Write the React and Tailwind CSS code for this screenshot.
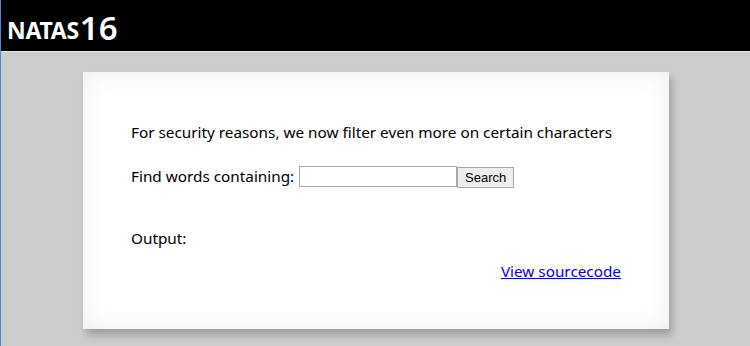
export default function App() {
  return (
    <div className="w-[750px] h-[346px] overflow-hidden bg-[#cccccc] border-l border-[#3c8fdc] relative" style={{ fontFamily: '"Noto Sans", sans-serif' }}>
      <div className="h-[52px] bg-black border-b border-[#e6e6e6] flex items-end pl-[6px] pb-[9px]">
        <span className="text-white font-bold text-[23px] leading-none tracking-[-0.3px]">NATAS</span>
        <span className="text-white text-[33px] leading-none font-semibold ml-[1px] relative top-[2px]">16</span>
      </div>
      <div className="pt-[20px] flex">
        <div className="ml-[82px] w-[586px] h-[257px] bg-white shadow-[inset_0_0_25px_rgba(0,0,0,0.07),3px_6px_7px_rgba(0,0,0,0.22)] px-[48px] pt-[49px] text-[15.3px] text-black">
          <p className="leading-[22px]">For security reasons, we now filter even more on certain characters</p>
          <div className="flex items-center mt-[22px] h-[22px]">
            <span className="leading-[22px] mr-[5px]">Find words containing:</span>
            <input className="w-[158px] h-[21px] border border-[#a9a9a9] bg-white" />
            <button className="h-[21px] w-[57px] border border-[#a9a9a9] bg-[#eeeeee] text-[13px] leading-none relative top-[1px]" style={{ fontFamily: '"Liberation Sans", Arial, sans-serif' }}>Search</button>
          </div>
          <p className="mt-[40px] leading-[22px]">Output:</p>
          <div className="flex justify-end mt-[11px]">
            <a href="#" className="text-[#0000ee] underline leading-[22px]">View sourcecode</a>
          </div>
        </div>
      </div>
    </div>
  );
}
